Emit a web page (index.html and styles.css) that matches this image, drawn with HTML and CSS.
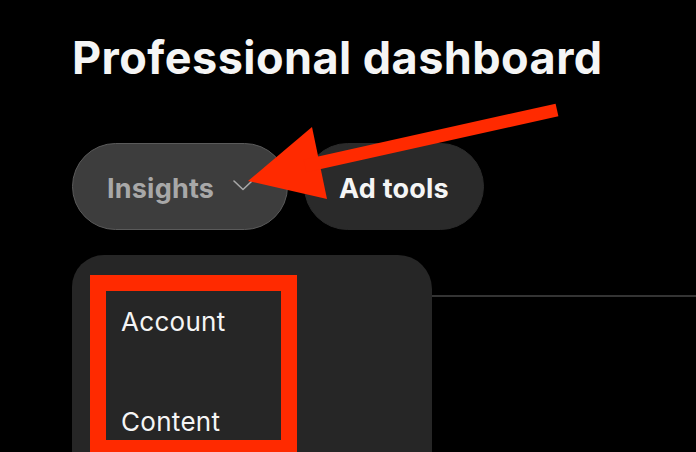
FILE: index.html
```html
<!DOCTYPE html>
<html lang="en">
<head>
<meta charset="utf-8">
<title>Professional dashboard</title>
<link rel="stylesheet" href="styles.css">
</head>
<body>
<main class="page">
  <h1 class="title">Professional dashboard</h1>
  <nav class="tabs">
    <button class="tab tab-active">
      <span>Insights</span>
      <svg class="chevron" width="20" height="11" viewBox="0 0 20 11"><polyline points="1,1 10,9.5 19,1" fill="none" stroke="currentColor" stroke-width="1.6" stroke-linecap="round" stroke-linejoin="round"/></svg>
    </button>
    <button class="tab">Ad tools</button>
  </nav>
  <div class="content">
    <div class="menu">
      <div class="menu-item">Account</div>
      <div class="menu-item">Content</div>
    </div>
    <div class="rule"></div>
  </div>
</main>
<div class="annot-box"></div>
<svg class="annot-arrow" width="696" height="452" viewBox="0 0 696 452">
  <polygon points="248,181 312,127 327,199" fill="#ff2a00"/>
  <polygon points="303.6,159.7 555.6,103.7 558.4,116.3 306.4,172.3" fill="#ff2a00"/>
</svg>
</body>
</html>
```
FILE: styles.css
```css
html, body {
  margin: 0;
  padding: 0;
  background: #000;
  height: 452px;
  overflow: hidden;
}
body {
  position: relative;
  font-family: Inter, "Noto Sans", "Liberation Sans", sans-serif;
  color: #f5f5f5;
}
.page {
  padding: 36px 0 0 72px;
  display: flex;
  flex-direction: column;
}
.title {
  margin: 0;
  font-size: 45px;
  line-height: 44px;
  font-weight: 700;
  color: #f5f5f5;
  letter-spacing: 0.45px;
}
.tabs {
  display: flex;
  gap: 16px;
  margin-top: 63px;
}
.tab {
  box-sizing: border-box;
  height: 87px;
  border-radius: 44px;
  border: 1.5px solid #2a2a2a;
  background: #2a2a2a;
  color: #f5f5f5;
  font-family: Inter, "Noto Sans", "Liberation Sans", sans-serif;
  font-size: 27px;
  font-weight: 700;
  letter-spacing: 0.2px;
  padding: 3px 34px 0 34px;
  display: flex;
  align-items: center;
  gap: 19px;
}
.tab-active {
  background: #3d3d3d;
  border-color: #5a5a5a;
  color: #a8a8a8;
}
.chevron {
  display: block;
  margin-top: -6px;
}
.content {
  display: flex;
  margin-top: 25px;
}
.menu {
  width: 360px;
  height: 197px;
  background: #262626;
  border-radius: 32px 34px 0 0;
  box-sizing: border-box;
  padding: 51px 0 0 49px;
  display: flex;
  flex-direction: column;
  gap: 68px;
}
.menu-item {
  font-size: 26px;
  line-height: 32px;
  font-weight: 400;
  letter-spacing: 0.3px;
  color: #f5f5f5;
}
.rule {
  flex: 1;
  height: 2px;
  margin-top: 40px;
  background: #343434;
}
.annot-box {
  position: absolute;
  left: 90px;
  top: 275px;
  width: 207px;
  height: 177px;
  box-sizing: border-box;
  border: 16px solid #ff2a00;
  border-bottom-width: 12px;
}
.annot-arrow {
  position: absolute;
  left: 0;
  top: 0;
  pointer-events: none;
}
```
